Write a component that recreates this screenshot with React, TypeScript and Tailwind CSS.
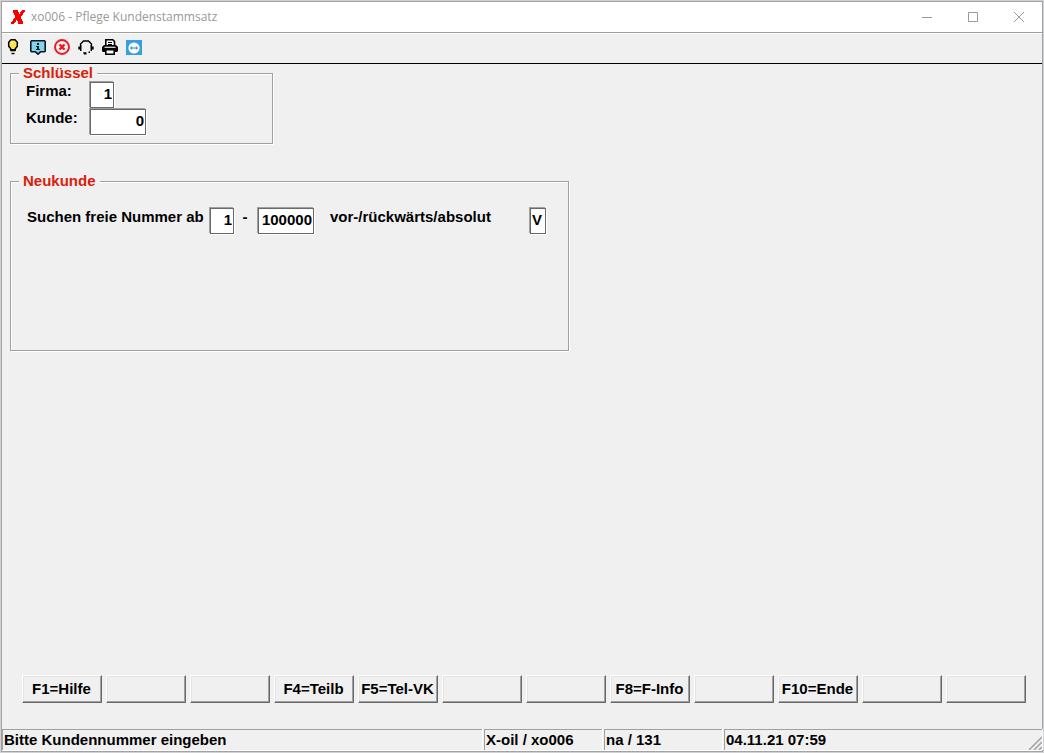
import React from "react";

const fieldClass =
  "block h-[26px] border border-[#696969] bg-white pb-1 text-[15px] leading-4 font-bold text-black outline-none shadow-[-1px_-1px_0_#a0a0a0,1px_1px_0_#fff]";

const groupClass =
  "border border-[#a0a0a0] shadow-[1px_1px_0_#fff,inset_1px_1px_0_#fff]";

const legendClass = "ml-2 bg-[#f0f0f0] px-1 leading-4 text-[#d9210a]";

function Logo() {
  return (
    <svg viewBox="0 0 14 14" className="h-[14px] w-[14px]" fill="#f80000" shapeRendering="crispEdges" aria-hidden="true">
      <path d="M2 0h4.500l1.700 4L11 0h3v1.500L9.500 7l2.500 5v2H7.500L6 9.800 3 14H0v-1.500L4.500 7 2 2z" />
    </svg>
  );
}

function BulbIcon() {
  return (
    <svg viewBox="0 0 16 16" className="h-4 w-4" aria-hidden="true">
      <path d="M5 .8h4L11.300 3.200v4L9.300 9.700v1.300H4.700V9.700L2.700 7.200v-4z" fill="#ffe04d" stroke="#000" strokeWidth="1.500" />
      <path d="M5 2.500h2v2H5z" fill="#fff7b8" />
      <path d="M4.500 10.300h5v2h-5zM5.500 14h3v1.200h-3z" fill="#000" />
      <path d="M5 12.300h4v1.200H5z" fill="#aaa" />
    </svg>
  );
}

function InfoIcon() {
  return (
    <svg viewBox="0 0 16 16" className="h-4 w-4" aria-hidden="true">
      <path d="M1.500 1.800h13l.7.7v9.600l-.7.7h-4L8 15.200l-2.500-2.400h-4l-.7-.7V2.500z" fill="#86d3ec" stroke="#061a26" strokeWidth="1.600" strokeLinejoin="round" />
      <path d="M7 4h2v2H7zM6 7h3v3h1v1H6v-1h1V8H6z" fill="#082030" />
    </svg>
  );
}

function CancelIcon() {
  return (
    <svg viewBox="0 0 16 16" className="h-4 w-4" fill="none" stroke="#ee1620" aria-hidden="true">
      <circle cx="8" cy="8" r="7" strokeWidth="1.900" />
      <path d="M5.500 5.500l5 5M10.500 5.500l-5 5" strokeWidth="2.400" />
    </svg>
  );
}

function HeadsetIcon() {
  return (
    <svg viewBox="0 0 16 16" className="h-4 w-4" aria-hidden="true">
      <path d="M2.500 6.500V5L5.500 2h5l3 3v1.500" fill="none" stroke="#000" strokeWidth="1.400" />
      <path d="M2 6h1.500v6H2v-1.500H.3v-3H2zM12.500 6H14v1.500h1.700v3H14V12h-1.500z" fill="#000" />
      <path d="M10.500 12.500h1.500v1.500h-1.500zM5 13.200h3.500v2.300H6z" fill="#000" />
    </svg>
  );
}

function PrinterIcon() {
  return (
    <svg viewBox="0 0 16 16" className="h-4 w-4" aria-hidden="true">
      <path d="M3.800 7V.8h7l1.700 1.700V7" fill="#fff" stroke="#000" strokeWidth="1.600" />
      <path d="M6 3h4v1H6zM6 5h4v1H6z" fill="#000" />
      <path d="M2 6h12l2 2v4l-1 1H1l-1-1V8z" fill="#000" />
      <path d="M2.500 7.700h11v1.100h-11z" fill="#fff" />
      <path d="M3.800 10.800h8.400v4.400H3.800z" fill="#fff" stroke="#000" strokeWidth="1.600" />
    </svg>
  );
}

function RemoteIcon() {
  return (
    <svg viewBox="0 0 16 16" className="h-4 w-4" aria-hidden="true">
      <path d="M0 1h16v15H0z" fill="#359fe0" />
      <circle cx="8" cy="9" r="5.600" fill="#fff" />
      <path d="M3.800 9L6.200 7v1.500h3.600V7l2.400 2-2.400 2V9.500H6.200V11z" fill="#3b8fc4" />
    </svg>
  );
}

const tools = [
  { label: "Tipp", icon: <BulbIcon /> },
  { label: "Information", icon: <InfoIcon /> },
  { label: "Abbrechen", icon: <CancelIcon /> },
  { label: "Support", icon: <HeadsetIcon /> },
  { label: "Drucken", icon: <PrinterIcon /> },
  { label: "Fernwartung", icon: <RemoteIcon /> },
];

const windowButtons = [
  { label: "Minimieren", path: "M0 5.500h10" },
  { label: "Maximieren", path: "M.5.5h9v9h-9z" },
  { label: "Schließen", path: "M0 0l10 10M10 0L0 10" },
];

const functionKeys = [
  "F1=Hilfe", "", "", "F4=Teilb", "F5=Tel-VK", "", "",
  "F8=F-Info", "", "F10=Ende", "", "",
];

const cellClass = "border-t border-l border-[#a0a0a0] pl-px shadow-[1px_0_0_#fff]";

export default function App() {
  return (
    <div className="flex min-h-screen bg-[#d0d2d3] p-px font-['Liberation_Sans',Arial,sans-serif] text-[15px] leading-4 font-bold text-black">
      <div className="flex grow flex-col border border-[#a0a2a4] bg-[#f0f0f0]">
        <header className="flex h-[31px] items-center border-b border-[#a0a0a0] bg-white pb-px pl-[9px]">
          <Logo />
          <h1 className="ml-1.5 grow font-['Open_Sans','Noto_Sans',sans-serif] text-[12px] font-normal text-[#999]">
            xo006 - Pflege Kundenstammsatz
          </h1>
          {windowButtons.map((b) => (
            <button key={b.label} aria-label={b.label} className="flex h-full w-[46px] items-center justify-center">
              <svg viewBox="0 0 10 10" className="h-2.5 w-2.5" fill="none" stroke="#999">
                <path d={b.path} />
              </svg>
            </button>
          ))}
        </header>

        <nav aria-label="Werkzeuge" className="flex h-[31px] items-center gap-2 border-t border-b border-t-white border-b-black pb-[3px] pl-1">
          {tools.map((t) => (
            <button key={t.label} aria-label={t.label}>{t.icon}</button>
          ))}
        </nav>

        <main className="flex grow flex-col items-start px-2 pt-px">
          <fieldset className={`${groupClass} w-[263px] pb-2`}>
            <legend className={legendClass}>Schlüssel</legend>
            <div className="flex flex-col gap-px pt-px pl-[15px]">
              <div className="flex">
                <label htmlFor="firma" className="w-16 pt-px">Firma:</label>
                <input id="firma" defaultValue="1" className={`${fieldClass} w-6 pr-px text-right`} />
              </div>
              <div className="flex">
                <label htmlFor="kunde" className="w-16 pt-px">Kunde:</label>
                <input id="kunde" defaultValue="0" className={`${fieldClass} w-14 pr-px text-right`} />
              </div>
            </div>
          </fieldset>

          <fieldset className={`${groupClass} mt-[29px] min-h-[178px] w-[559px]`}>
            <legend className={legendClass}>Neukunde</legend>
            <div className="flex pt-[19px] pl-4">
              <label htmlFor="von" className="w-[183px] pt-px">Suchen freie Nummer ab</label>
              <input id="von" defaultValue="1" className={`${fieldClass} w-6 pr-px text-right`} />
              <span className="w-6 pt-px pr-0.5 text-center">-</span>
              <input id="bis" aria-label="bis Nummer" defaultValue="100000" className={`${fieldClass} w-14 pr-px text-right`} />
              <label htmlFor="richtung" className="w-[216px] pt-px pl-4">vor-/rückwärts/absolut</label>
              <input id="richtung" defaultValue="V" className={`${fieldClass} w-4 pl-px`} />
            </div>
          </fieldset>
        </main>

        <div className="mb-[26px] grid grid-cols-12 gap-1 pr-4 pl-5">
          {functionKeys.map((label, i) => (
            <button
              key={i}
              aria-label={label || `F${i + 1}`}
              className="h-7 border border-t-white border-r-[#696969] border-b-[#696969] border-l-white pr-px pb-px text-center whitespace-nowrap shadow-[inset_-1px_-1px_0_#a0a0a0,inset_1px_1px_0_#e3e3e3]"
            >
              {label}
            </button>
          ))}
        </div>

        <footer className="grid h-[22px] grid-cols-[480px_118px_118px_1fr] gap-x-0.5 border-b border-white leading-5">
          <div className={cellClass}>Bitte Kundennummer eingeben</div>
          <div className={cellClass}>X-oil / xo006</div>
          <div className={cellClass}>na / 131</div>
          <div className={`${cellClass} flex items-end justify-between`}>
            <span>04.11.21 07:59</span>
            <svg viewBox="0 0 14 14" className="h-3.5 w-3.5" stroke="#a0a0a0" strokeWidth="1.500" aria-hidden="true">
              <path d="M1 14L14 1M6 14L14 6M11 14L14 11" />
            </svg>
          </div>
        </footer>
      </div>
    </div>
  );
}
